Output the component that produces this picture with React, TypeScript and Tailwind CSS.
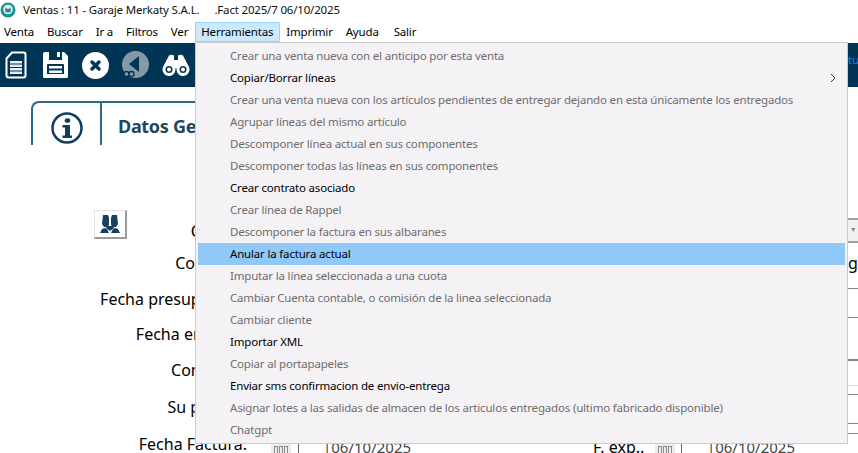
// App.tsx
const menuBar = ["Venta", "Buscar", "Ir a", "Filtros", "Ver", "Herramientas", "Imprimir", "Ayuda", "Salir"];

// enabled = black text, otherwise greyed out
const tools = [
  { label: "Crear una venta nueva con el anticipo por esta venta" },
  { label: "Copiar/Borrar líneas", enabled: true, submenu: true },
  { label: "Crear una venta nueva con los artículos pendientes de entregar dejando en esta únicamente los entregados" },
  { label: "Agrupar líneas del mismo artículo" },
  { label: "Descomponer línea actual en sus componentes" },
  { label: "Descomponer todas las líneas en sus componentes" },
  { label: "Crear contrato asociado", enabled: true },
  { label: "Crear línea de Rappel" },
  { label: "Descomponer la factura en sus albaranes" },
  { label: "Anular la factura actual", enabled: true, active: true },
  { label: "Imputar la línea seleccionada a una cuota" },
  { label: "Cambiar Cuenta contable, o comisión de la linea seleccionada" },
  { label: "Cambiar cliente" },
  { label: "Importar XML", enabled: true },
  { label: "Copiar al portapapeles" },
  { label: "Enviar sms confirmacion de envio-entrega", enabled: true },
  { label: "Asignar lotes a las salidas de almacen de los articulos entregados (ultimo fabricado disponible)" },
  { label: "Chatgpt" },
];

const labels = [
  { text: "Contacto:", h: "h-[36px]" },
  { text: "Fecha presupuesto:", h: "h-[35px]" },
  { text: "Fecha entrega:", h: "h-[36px]" },
  { text: "Concepto:", h: "h-[37px]" },
  { text: "Su pedido:", h: "h-[37px]" },
];

const menuClass = (item: string) => {
  if (item === "Herramientas") {
    return "mr-[6px] -ml-[6px] flex h-[20px] items-center border border-[#99d1ff] bg-[#cce8ff] pl-[5px] pr-[6px]";
  }
  if (item === "Ayuda") return "mr-[15px] flex h-[20px] items-center";
  return "mr-[13px] flex h-[20px] items-center";
};

const AppLogo = () => (
  <svg width="16" height="16" viewBox="0 0 16 16">
    <circle cx="8" cy="8" r="7.5" fill="#17958f" />
    <circle cx="8" cy="7.5" r="4.8" fill="#e8f4f2" />
    <path d="M5.500 5c1 2.500 4 2.500 5 0l.5 4c-1 2-5 2-6 0z" fill="#2e8a96" />
  </svg>
);

const DocIcon = () => (
  <svg width="22" height="28" viewBox="0 0 22 28">
    <path d="M7 1.500h11.500a2 2 0 0 1 2 2v21a2 2 0 0 1-2 2h-15a2 2 0 0 1-2-2V7.500z" fill="#003556" stroke="#fff" strokeWidth="2" />
    <path d="M5 10h12v2.500H5zM5 13.500h12V16H5zM5 17h12v2.500H5zM5 20.500h12V23H5z" fill="#e8edf0" />
  </svg>
);

const SaveIcon = () => (
  <svg width="25" height="28" viewBox="0 0 25 28">
    <path d="M2 1h4v8h13V1h2l4 4v20.500a1.500 1.500 0 0 1-1.500 1.500h-22A1.500 1.500 0 0 1 0 25.500V3a2 2 0 0 1 2-2z" fill="#fff" />
    <path d="M14 1h3v5h-3z" fill="#fff" />
    <path d="M5 13h15a1 1 0 0 1 1 1v9H4v-9a1 1 0 0 1 1-1z" fill="#003556" />
    <path d="M6 15h13v2.500H6zM6 19.500h13V22H6z" fill="#fff" />
  </svg>
);

const CloseIcon = () => (
  <svg width="27" height="27" viewBox="0 0 27 27">
    <circle cx="13.500" cy="13.500" r="13.500" fill="#fff" />
    <path d="M10 10l7 7M17 10l-7 7" stroke="#003556" strokeWidth="3.500" strokeLinecap="round" />
  </svg>
);

const BackIcon = () => (
  <svg width="27" height="28" viewBox="0 0 27 28">
    <circle cx="13.500" cy="13.500" r="13.500" fill="#8499a8" />
    <path d="M17 5v16L7 13z" fill="#003556" />
    <circle cx="4.500" cy="23" r="2.500" fill="#8499a8" stroke="#003556" strokeWidth="1.300" />
    <circle cx="9.500" cy="23" r="2.500" fill="#8499a8" stroke="#003556" strokeWidth="1.300" />
  </svg>
);

const BinocularsIcon = () => (
  <svg width="28" height="22" viewBox="0 0 28 22">
    <path d="M7 1.500C8 .5 11 .5 12 1.500V6h4V1.500c1-1 4-1 5 0L27 13a6.500 6.500 0 1 1-12.500 3v-2h-1v2A6.500 6.500 0 1 1 1 13z" fill="#fff" />
    <circle cx="7" cy="15.500" r="3.500" fill="#003556" />
    <circle cx="21" cy="15.500" r="3.500" fill="#003556" />
    <circle cx="7" cy="15.500" r="2" fill="#fff" />
    <circle cx="21" cy="15.500" r="2" fill="#fff" />
  </svg>
);

const InfoIcon = () => (
  <svg width="32" height="32" viewBox="0 0 32 32">
    <circle cx="16" cy="16" r="14.500" fill="none" stroke="#0f3f5f" strokeWidth="2.500" />
    <ellipse cx="16.500" cy="8.500" rx="2.800" ry="2.300" fill="#0f3f5f" />
    <path d="M11.500 13h7.500v10.500h2V26h-9.500v-2.500h2.500v-8h-2.500z" fill="#0f3f5f" />
  </svg>
);

const PeopleIcon = () => (
  <svg width="22" height="20" viewBox="0 0 22 20">
    <path d="M4 1h5l1 3v7L8 13H5L3 10z" fill="#17415f" />
    <path d="M13 1h5l1 9-2 3h-3l-2-2V4z" fill="#17415f" />
    <path d="M1 19l2-4 3-1 2 1 2 4zM12 19l2-4 2-1 3 1 2 4z" fill="#17415f" />
    <path d="M8 12h6l1 2-4 3-4-3z" fill="#17415f" />
  </svg>
);

const CalendarIcon = () => (
  <div className="flex h-[10px] w-[20px] items-start justify-center gap-[1px] bg-[#ececec] pt-[2px]">
    <div className="h-[9px] w-[4px] border border-[#8a8a8a]" />
    <div className="h-[9px] w-[4px] border border-[#8a8a8a]" />
    <div className="h-[9px] w-[4px] border border-[#8a8a8a]" />
  </div>
);

export default function App() {
  return (
    <div className="relative h-[453px] w-[858px] overflow-hidden bg-white font-['Noto_Sans',sans-serif] text-[11.5px] tracking-[-0.18px] text-black">
      {/* title bar */}
      <div className="flex h-[22px] items-center pb-[2px] whitespace-nowrap text-[#111]">
        <AppLogo />
        <span className="ml-[7px]">Ventas : 11 - Garaje Merkaty S.A.L.</span>
        <span className="ml-[15px]">.Fact 2025/7 06/10/2025</span>
      </div>

      {/* menu bar */}
      <div className="flex h-[20px] items-center pl-[4px]">
        {menuBar.map((item) => (
          <div key={item} className={menuClass(item)}>
            {item}
          </div>
        ))}
      </div>

      {/* toolbar */}
      <div className="mt-[1px] flex h-[44px] items-center bg-[#003556] pl-[5px]">
        <DocIcon />
        <div className="ml-[16px]">
          <SaveIcon />
        </div>
        <div className="ml-[14px]">
          <CloseIcon />
        </div>
        <div className="ml-[13px]">
          <BackIcon />
        </div>
        <div className="ml-[13px]">
          <BinocularsIcon />
        </div>
        <div className="mb-[10px] ml-auto w-[10px] overflow-hidden whitespace-nowrap text-[#0a84e0]">tura</div>
      </div>

      {/* tab */}
      <div className="ml-[31px] mt-[14px] flex h-[44px] w-[500px] rounded-tl-[8px] border-l-2 border-t-2 border-[#2e6a84]">
        <div className="flex h-full w-[69px] items-end justify-center border-r-2 border-[#2e6a84] pb-[1px]">
          <InfoIcon />
        </div>
        <span className="ml-[16px] mt-[10px] text-[18px] font-bold tracking-[-0.3px] text-[#1b4763]">Datos Generales</span>
      </div>

      {/* form */}
      <div className="mt-[65px] flex">
        <div className="w-[848px] shrink-0 text-[16px] tracking-normal">
          <div className="flex h-[41px] w-[247px]">
            <div className="ml-[94px] flex h-[29px] w-[33px] items-center justify-center border-b-2 border-l border-r-2 border-t border-b-[#9a9a9a] border-l-[#e4e4e4] border-r-[#9a9a9a] border-t-[#e4e4e4]">
              <PeopleIcon />
            </div>
            <div className="ml-auto pt-[9px] leading-[24px]">Cliente:</div>
          </div>
          {labels.map((l) => (
            <div key={l.text} className={`${l.h} w-[247px] whitespace-nowrap text-right leading-[24px]`}>
              {l.text}
            </div>
          ))}
          <div className="flex h-[21px] items-start">
            <div className="w-[247px] whitespace-nowrap text-right leading-[24px]">Fecha Factura:</div>
            <div className="ml-[24px] mt-[12px]">
              <CalendarIcon />
            </div>
            <div className="ml-[7px] mt-[10px] h-[12px] w-px bg-[#666]" />
            <div className="ml-[24px] mt-[5px] text-[15px] leading-[20px] text-[#444]">|06/10/2025</div>
            <div className="ml-auto mt-[5px] w-[62px] whitespace-nowrap leading-[20px]">F. exp..</div>
            <div className="mt-[12px]">
              <CalendarIcon />
            </div>
            <div className="ml-[6px] mt-[10px] h-[12px] w-px bg-[#666]" />
            <div className="ml-[25px] mr-[53px] mt-[5px] text-[15px] leading-[20px] text-[#444]">|06/10/2025</div>
          </div>
        </div>

        {/* what shows to the right of the menu */}
        <div className="flex w-[10px] shrink-0 flex-col overflow-hidden pt-[8px]">
          <div className="flex h-[25px] items-center justify-center border-y-2 border-[#a0a0a0] bg-[#f0f0f0] text-[7px] text-[#888]">▼</div>
          <div className="h-[45px] whitespace-nowrap pt-[10px] text-[16px] leading-[20px]">gn</div>
          <div className="h-[29px] border-t border-[#888]" />
          <div className="h-[42px] border-t border-[#888]" />
          <div className="h-[26px] border-t-2 border-[#888]" />
          <div className="h-[9px] border-t border-[#ddd]" />
          <div className="h-[29px] border-t border-[#888]" />
          <div className="h-[10px] border-t border-[#888]" />
          <div className="border-t border-[#888]" />
        </div>
      </div>

      {/* dropdown */}
      <div className="absolute left-[195px] top-[42px] h-[402px] w-[653px] border border-[#ccc] bg-[#f5f2f6] p-[2px]">
        {tools.map((t) => (
          <div
            key={t.label}
            className={`flex h-[22px] items-center pl-[32px] pr-[8px] ${t.active ? "bg-[#90c8f8]" : ""} ${
              t.enabled ? "text-black" : "text-[#6d6d6d]"
            }`}
          >
            <span className="flex-1 whitespace-nowrap">{t.label}</span>
            {t.submenu && (
              <svg width="6" height="10" viewBox="0 0 6 10" className="mr-[1px]">
                <path d="M1 1l4 4-4 4" fill="none" stroke="#333" strokeWidth="1" />
              </svg>
            )}
          </div>
        ))}
      </div>
    </div>
  );
}
